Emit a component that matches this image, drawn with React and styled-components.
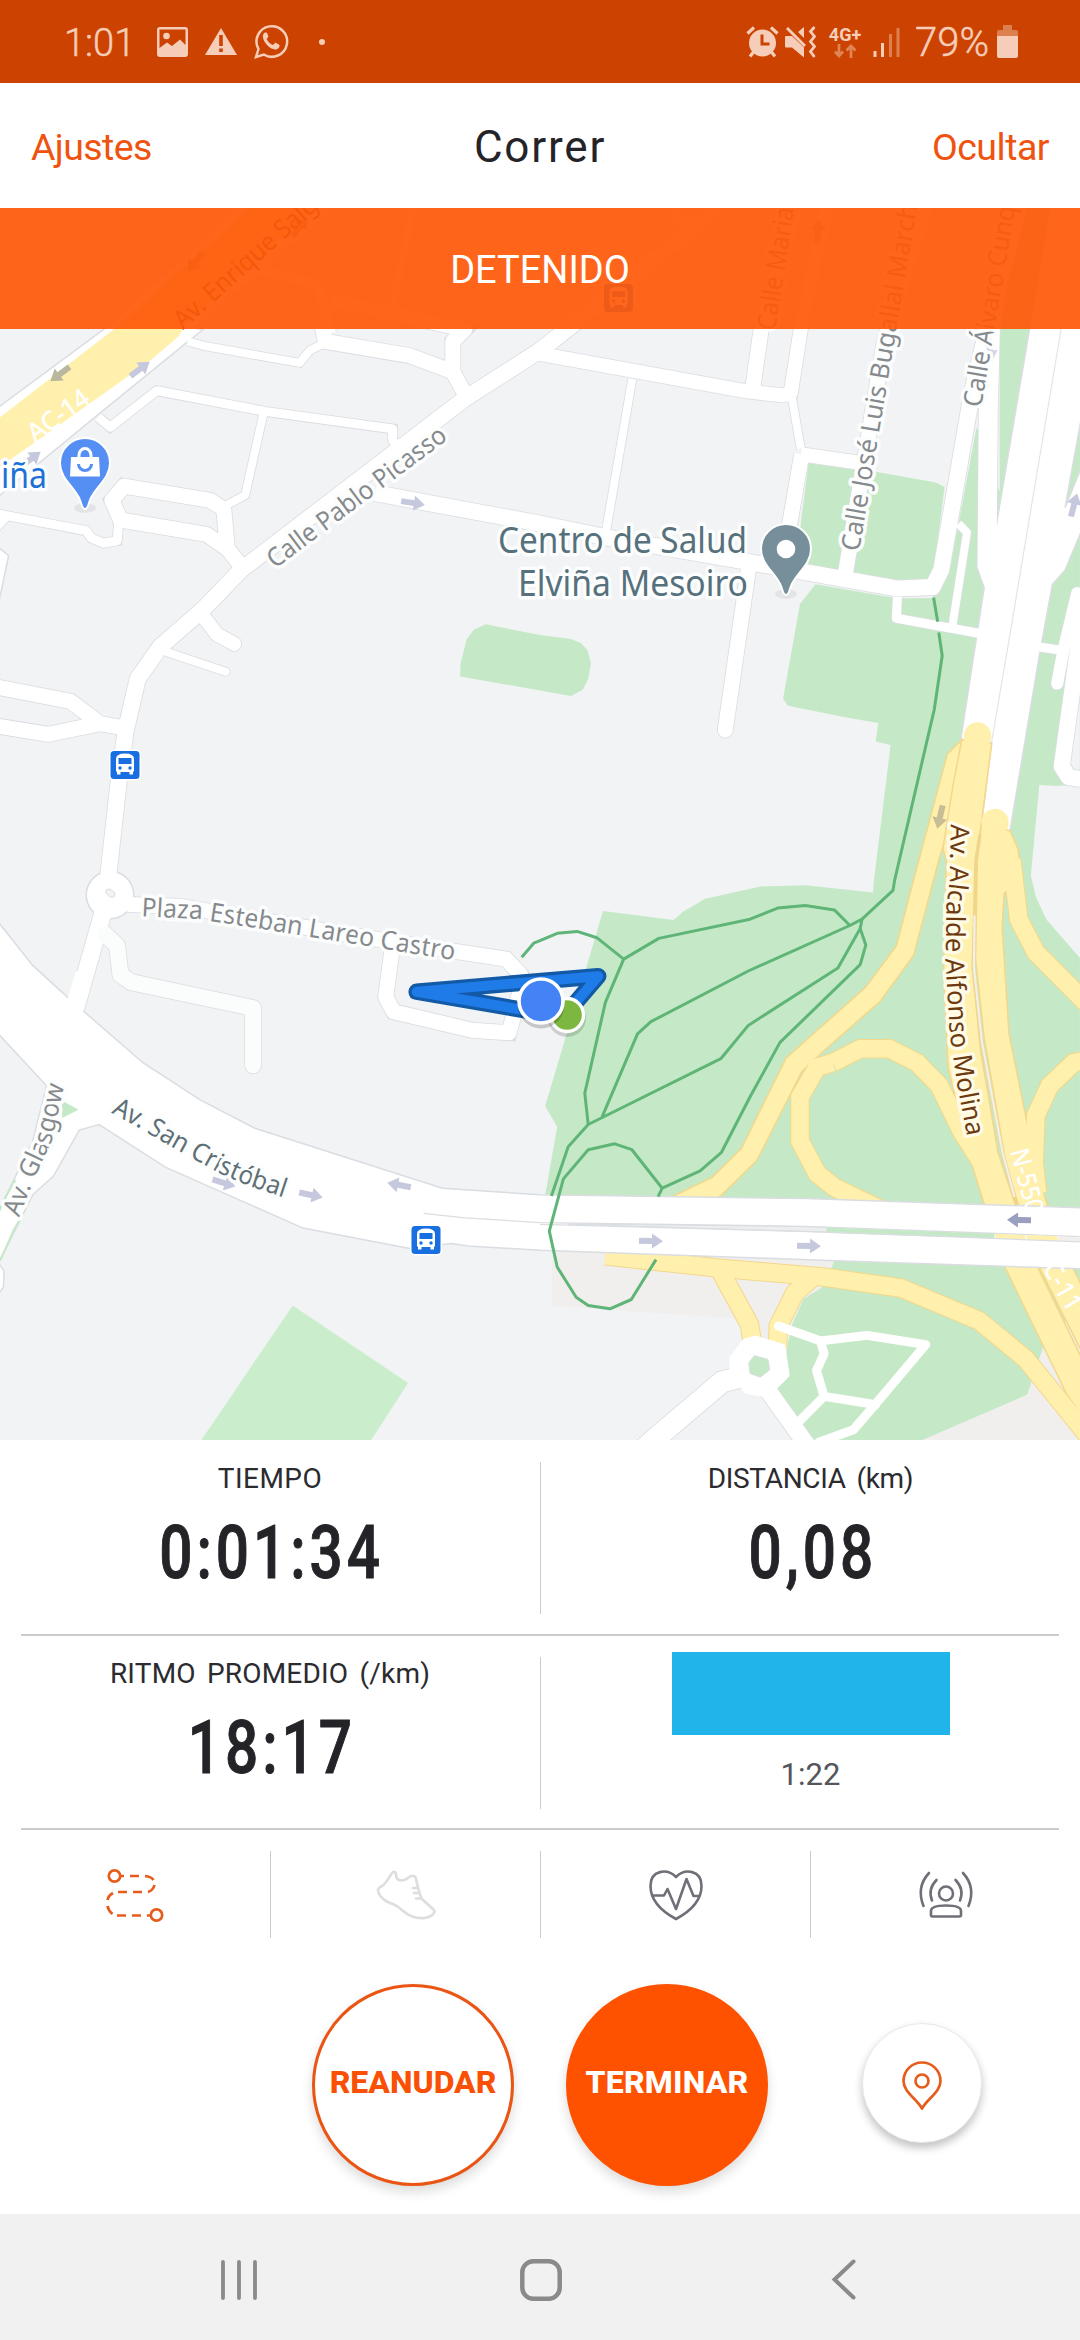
import React from "react";
import styled, { createGlobalStyle } from "styled-components";

const GlobalStyle = createGlobalStyle`
  * { box-sizing: border-box; }
  body { margin: 0; background: #fff; }
  svg { display: block; flex: none; overflow: visible; }
`;

const UI = `Roboto, "Noto Sans", sans-serif`;
const MAP_FONT = `"Noto Sans", "Open Sans", sans-serif`;

/* ---------- map geometry ---------- */

/* Points are stored per survey tile; each tile has its own origin and resolution. */
const TILES = {
  A: [0, 320, 2.904, 2.8],
  B: [540, 320, 2.904, 2.8],
  C: [0, 860, 2.904, 2.703],
  D: [540, 860, 2.904, 2.703],
  T: [0, 200, 1.452, 3],
};

function pts(data) {
  let tile = TILES.A;
  return data
    .trim()
    .split(/\s+/)
    .map((token) => {
      let t = token;
      if (TILES[t[0]]) {
        tile = TILES[t[0]];
        t = t.slice(1);
      }
      const [x, y] = t.split(",").map(Number);
      return `${(tile[0] + x / tile[2]).toFixed(1)},${(tile[1] + y / tile[3]).toFixed(1)}`;
    })
    .join(" ");
}
const pathOf = (data) => "M" + pts(data).split(" ").join(" L");

const GREENS = [
  "B780,400 915,420 975,425 1150,455 1175,468 1140,725 1040,735 740,700",
  "B800,740 755,795 706,1060 720,1080 890,1113 982,1128 975,1180 1018,1190 970,1568 D967,88 770,68 640,72 480,105 415,140 388,162 183,138 15,665 50,722 15,905 D0,960 D833,960 D833,1020 D1568,1130 D1568,265 1470,160 1440,100 1425,40 B1425,1560 1450,1302 1500,1305 1568,1300 T1568,20 T1482,20 T1452,400 B1335,27 1335,480 1268,300 1190,700 1140,778 1040,780",
  "D862,1070 1568,1100 1568,1200 1460,1320 1415,1445 1110,1568 760,1568 640,1400 715,1330 730,1260 765,1187 820,1155",
  "A1336,998 1338,960 1355,895 1375,868 1410,852 B0,882 90,893 120,905 138,925 148,960 140,1005 125,1035 90,1053 0,1037",
];
const BEIGES = [
  "D35,1055 35,1205 580,1240 600,1320 680,1320 740,1240 820,1155 862,1140 862,1070",
  "D1460,1320 1568,1200 1568,1568 1110,1568 1415,1445",
];

const ROADS = [
  [8, "A545,60 590,72 870,120 900,85 935,68"],
  [15, "A935,15 945,60 1190,100 1315,145 1355,215"],
  [15, "T480,300 675,388 A1315,60 1315,145"],
  [11, "T376,208 462,255 468,300 480,400"],
  [8, "T600,20 570,320"],
  [9, "A285,272 320,300 455,198 770,256 1140,305 1140,335 1155,360"],
  [8, "A765,262 712,490 655,520"],
  [15, "A710,700 660,640 600,600 350,560 325,505 360,465 610,505 650,530 660,640"],
  [9, "A345,565 340,618 300,625 265,610 250,590 15,547 -20,540"],
  [8, "A25,545 -10,582"],
  [16, "T1045,15 T1000,95 T825,385 B60,40 B0,85 A1350,220 700,700 590,810 465,915 400,1005 365,1150 345,1290 315,1550 C315,60"],
  [12, "T975,20 T1002,95"],
  [14, "A590,830 630,880 680,907", true],
  [8, "A485,930 655,985", true],
  [15, "A-20,1026 205,1068 290,1130 350,1140"],
  [15, "A-20,1135 140,1160 290,1130"],
  [16, "A1090,485 1568,570 B200,610 620,680 880,725 1040,752 1140,748 1165,700 1255,200 T1440,330 T1480,20"],
  [14, "B0,95 600,200 705,211 728,205 757,27 T1200,20"],
  [15, "B617,195 642,27 T1155,20"],
  [8, "B268,165 192,590"],
  [8, "B732,220 757,360"],
  [14, "B757,376 930,400"],
  [15, "B760,376 720,600 715,690"],
  [15, "B885,720 1000,60 T1345,20"],
  [19, "B1308,20 1302,250 1298,680 1345,800"],
  [8, "B1215,570 1240,595 1198,855"],
  [9, "B1038,775 1035,835 1290,880"],
  [15, "B605,700 538,1148", true],
  [9, "B1445,915 1515,925"],
  [12, "B1560,765 1520,925 1502,1018", true],
  [16, "B1580,800 1515,1250 1535,1280 1590,1288"],
  [17, "C318,80 220,400"],
  [15, "C370,120 520,125 1130,220 1470,268 1512,310 1512,350 1478,467 1370,460 1143,410 1120,370 1140,230"],
  [21, "D575,1400 530,1410 330,1568 280,1610"],
  [17, "D655,1425 765,1568 790,1600"],
];
const PATHS = [
  "D693,1260 815,1300 950,1285 1120,1310 975,1470 910,1540 810,1574",
  "D815,1300 825,1335 803,1380 825,1450 975,1472",
  "D825,1450 750,1520",
];
const WHITE_AREAS = [
  "A-10,248 300,27 T345,20 T490,20 T283,385 A590,27 540,65 285,265 -10,498",
  "A-10,632 25,660 -10,820",
  "T1525,20 T1590,20 B1590,180 1525,525 1590,370 1590,550 1525,700 1488,740 1450,940 1365,1430 1280,1430 1310,1190 1222,1175 1290,750 1268,690 1325,575",
  "C-20,150 95,285 195,370 415,548 580,648 740,725 1285,887 1568,905 D770,915 1600,941 1600,1106 860,1083 0,1055 C1360,1043 1310,1037 1190,1050 880,995 480,830 288,715 230,730 155,855 95,905 -10,1100 -10,960 95,760 135,610 -20,455",
  "C-10,1080 12,1112 10,1155 -10,1180",
];
const YELLOW_LINES = [
  "D850,548 930,510 1015,510 1095,548 1160,610 1225,735 1290,830",
  "D850,548 805,560 755,640 755,760 805,848 855,885 990,945",
  "D1370,0 1390,160 1440,250 1590,390",
  "D1590,540 1550,548 1480,610 1440,690 1435,820 1445,900",
  "D190,1070 520,1103 820,1127 1048,1157 1275,1245 1412,1350 1590,1555",
  "D520,1105 608,1255 620,1320",
  "D790,1130 740,1170 692,1260 690,1320",
];
const YELLOW_AREAS = [
  "B1225,1175 1183,1215 1085,1568 D1035,232 945,345 715,535 585,780 500,858 350,925 490,930 525,908 630,812 760,572 825,515 988,382 1085,258 1158,0 B1215,1340",
  "B1225,1175 1312,1185 1280,1420 D1268,0 1255,290 1280,520 1330,790 1385,945 1450,1110 1600,1400 1600,1540 1530,1445 1350,1100 1290,930 1245,795 1185,560 1172,300 1180,0 B1170,1480 1200,1300",
  "B1282,1410 1365,1430 1388,1480 1400,1568 D1348,90 1342,180 1362,470 1410,690 1443,840 1500,1015 1600,1200 1600,1380 1455,1110 1390,935 1355,830 1290,480 1265,270 1270,0",
];
const TRAILS = [
  "B1143,777 1155,845",
  "B1158,875 1168,940 1145,1090 1030,1568 D1025,82 935,160 900,177 855,135 770,123 690,130 610,160 345,212 243,268 190,385 130,630 140,715",
  "D900,177 605,300 322,437 283,470 180,695",
  "D935,160 930,185 865,292 605,447 525,537 140,715 82,775 33,908",
  "D930,185 946,230 930,283 697,493 610,640 527,790 465,840 355,887 343,910",
  "D355,887 267,783 217,767 140,783 68,862 27,1003 50,1100 105,1182 140,1204 203,1213 265,1188 337,1080",
  "D243,268 165,210 108,193 50,198 0,218 C1550,225 1515,263",
];
const TRACK = "D60,430 D90,400 D169,314 C1210,356 C1568,413";

const ARROWS = [
  [60, 374, 143, "#b9b79f"],
  [140, 369, -37, "#c6c9dd"],
  [31, 459, -37, "#c6c9dd"],
  [195, 262, 125, "#c9a27a"],
  [300, 227, -52, "#c9a27a"],
  [818, 231, -86, "#b6b9cd"],
  [990, 350, 80, "#d3d5e6"],
  [413, 503, 9, "#c6c9dd"],
  [1074, 505, -75, "#c6c9dd"],
  [224, 1183, 17, "#c6c9dd"],
  [311, 1195, 12, "#c6c9dd"],
  [399, 1185, 191, "#c6c9dd"],
  [651, 1241, 1, "#c6c9dd"],
  [809, 1246, 1, "#c6c9dd"],
  [1019, 1220, 181, "#9a9fc0"],
  [940, 817, 103, "#c8be95"],
];

const LABELS = [
  { id: "picasso", d: "M275,569 L455,434", len: 217, text: "Calle Pablo Picasso" },
  { id: "plaza", d: pathOf("C410,152 580,160 870,203 1330,273"), len: 316, text: "Plaza Esteban Lareo Castro" },
  { id: "cristobal", d: pathOf("C322,683 400,722 480,766 640,848 720,880 840,917"), len: 193, text: "Av. San Cristóbal", color: "#5f6f76" },
  { id: "glasgow", d: pathOf("C55,966 100,860 150,760 190,595"), len: 140, text: "Av. Glasgow" },
  { id: "jose", d: "M859,552 L924,165", len: 366, text: "Calle José Luis Bugallal Marche" },
  { id: "alvaro", d: "M981,408 L1020,180", len: 219, text: "Calle Álvaro Cunqu" },
  { id: "maria", d: "M775,331 L797,190", len: 124, text: "Calle Maria" },
  { id: "enrique", d: "M183,330 L341,188", len: 212, text: "Av. Enrique Salgad", color: "#6d3a10", halo: "none" },
  {
    id: "molina",
    d: pathOf("B1193,1412 1190,1568 D1180,130 1178,280 1190,470 1210,600 1243,760"),
    len: 314,
    text: "Av. Alcalde Alfonso Molina",
    color: "#6d3a10",
    halo: "#fffbe6",
  },
  { id: "ac14", d: "M35,443 L98,398", len: 70, text: "AC-14", color: "#fff", halo: "none", weight: 500 },
  { id: "n550", d: "M1010,1151 L1032,1235", len: 66, text: "N-550", color: "#fff", halo: "none", weight: 500 },
  { id: "c11", d: "M1042,1268 L1075,1325", len: 52, text: "C-11", color: "#fff", halo: "none", weight: 500 },
];

/* ---------- map ---------- */

const MapArea = styled.section`
  display: grid;
  height: 1232px;
  overflow: hidden;
  & > * { grid-area: 1 / 1; }
`;
const MapSvg = styled.svg`
  width: 1080px;
  height: 1232px;
  overflow: hidden;
`;
const StreetName = styled.text`
  font: ${(p) => p.$weight || 400} 26px ${MAP_FONT};
  fill: ${(p) => p.$color || "#868a8d"};
  stroke: ${(p) => p.$halo || "#fcfdfd"};
  stroke-width: 7px;
  stroke-linejoin: round;
  paint-order: stroke;
`;
const PoiName = styled(StreetName)`
  font-size: 36px;
`;

function BusStop({ x, y }) {
  return (
    <g transform={`translate(${x} ${y})`}>
      <rect x="-16" y="-15.5" width="32" height="31" rx="5" fill="#fff" />
      <rect x="-14.5" y="-14" width="29" height="28" rx="3.5" fill="#1a6fe0" />
      <path d="M-9,-6 Q-9,-11.500 0,-11.500 Q9,-11.500 9,-6 V6.500 H8 V9.500 H4.500 V7 H-4.500 V9.500 H-8 V6.500 H-9 Z" fill="#fff" />
      <rect x="-6.500" y="-7" width="13" height="6" fill="#1a6fe0" />
      <circle cx="-5" cy="3" r="1.700" fill="#1a6fe0" />
      <circle cx="5" cy="3" r="1.700" fill="#1a6fe0" />
    </g>
  );
}

function Pin({ x, y, color, children }) {
  return (
    <g transform={`translate(${x} ${y})`}>
      <ellipse cx="0" cy="45" rx="11" ry="5" fill="#000" opacity=".06" />
      <path d="M0,46 C-3,46 -3,42 -5,37 C-10,24 -25,16 -25,0 A25,25 0 0 1 25,0 C25,16 10,24 5,37 C3,42 3,46 0,46 Z" fill={color} stroke="#fff" strokeWidth="2" />
      {children}
    </g>
  );
}

function StreetMap() {
  return (
    <MapSvg viewBox="0 208 1080 1232">
      <rect y="208" width="1080" height="1232" fill="#f1f3f5" />
      <g fill="#f1efed">{BEIGES.map((d) => <polygon key={d} points={pts(d)} />)}</g>
      <g fill="#c5e9c6">{GREENS.map((d) => <polygon key={d} points={pts(d)} />)}</g>
      <polygon points={pts("C850,1204 1185,1414 1075,1572 582,1572")} fill="#caeecb" />
      <polygon points={pts("B1568,830 1540,1240 1550,1258 1568,1262")} fill="#f1f3f5" />

      <g fill="none" stroke="#dadde1">
        {ROADS.map(([w, d, round]) => (
          <polyline key={d} points={pts(d)} strokeWidth={w + 1.6} strokeLinecap={round ? "round" : "butt"} />
        ))}
        <polyline points={pts("C305,200 340,232 350,310 380,330 735,400 735,555")} strokeWidth="17.500" strokeLinecap="round" strokeLinejoin="round" />
        <circle cx="110" cy="895" r="23.500" strokeWidth="2" />
      </g>
      <g fill="#fff" stroke="#dadde1" strokeWidth="1.500">
        {WHITE_AREAS.slice(0, 3).map((d) => <polygon key={d} points={pts(d)} />)}
      </g>
      <g fill="none" stroke="#fff">
        {ROADS.map(([w, d, round]) => (
          <polyline key={d} points={pts(d)} strokeWidth={w} strokeLinecap={round ? "round" : "butt"} strokeLinejoin="round" />
        ))}
      </g>
      <polyline points={pts("C305,200 340,232 350,310 380,330 735,400 735,555")} fill="none" stroke="#fbfcfc" strokeWidth="16" strokeLinecap="round" strokeLinejoin="round" />
      <circle cx="110" cy="895" r="23" fill="#fff" />
      <path d="M106,890 l4,-1 l5,4 l-1,4 l-4,0 l-4,-4 Z" fill="#f1f3f5" stroke="#dadde1" />
      <polygon points={pts("A-10,280 330,27 T365,20 T460,20 T262,385 A530,27 520,45 435,115 -10,418")} fill="#fff0ad" />
      <polyline points={pts("T1550,20 B1513,27 1365,880 1310,1190")} fill="none" stroke="#e3e5e8" strokeWidth="1.200" />

      <g fill="none" stroke="#f3d78b" strokeWidth="19.500">
        {YELLOW_LINES.map((d) => <polyline key={d} points={pts(d)} />)}
      </g>
      <g fill="#fff0ad" stroke="#f3d78b" strokeWidth="1.500">
        {YELLOW_AREAS.map((d) => <polygon key={d} points={pts(d)} />)}
      </g>
      <g fill="none" stroke="#fff0ad" strokeWidth="17.500">
        {YELLOW_LINES.map((d) => <polyline key={d} points={pts(d)} />)}
      </g>
      <circle cx="977.500" cy="736" r="13.700" fill="#fff0ad" />
      <circle cx="995" cy="822.500" r="13.700" fill="#fff0ad" />
      <polyline points={pts("B1278,1440 D1266,0 1258,290 1282,490 1343,790 1388,945")} fill="none" stroke="#f0d58c" strokeWidth="3.400" />
      <polyline points={pts("D1262,150 1260,290 1283,490 1343,790 1378,910")} fill="none" stroke="#f2efec" strokeWidth="2.200" />

      <g fill="#fff" stroke="#dadde1" strokeWidth="1.500">
        {WHITE_AREAS.slice(3).map((d) => <polygon key={d} points={pts(d)} />)}
      </g>
      <polygon points={pts("C195,380 220,300 265,320 240,415 220,430")} fill="#fff" />
      <polyline points={pts("C1230,955 1350,967 1568,980 D770,990 1600,1019")} fill="none" stroke="#dadde1" strokeWidth="1.300" />
      <polygon points={pts("D80,984 770,991 833,993 833,1006")} fill="#eeeeef" stroke="#dadde1" strokeWidth="1" />
      <polygon points={pts("D833,993 1320,1010 1320,1023 833,1008")} fill="#c5e9c6" />
      <polygon points={pts("D1320,1010 1408,1014 1412,1026 1325,1023")} fill="#fff0ad" />
      <polygon points={pts("D1412,1014 1500,1016 1508,1029 1416,1026")} fill="#fff0ad" />
      <polygon points={pts("D1504,1018 1570,1020 1570,1031 1508,1029")} fill="#f1efed" />
      <polyline points={pts("D0,985 840,1006 1600,1033")} fill="none" stroke="#dadde1" strokeWidth="1.200" />

      <polygon points={pts("C180,650 228,675 180,697")} fill="#c5e9c6" />
      <g fill="none" stroke="#c5e9c6" strokeWidth="2">
        <polyline points={pts("C0,1083 40,1000 68,955")} />
        <polyline points={pts("C-2,948 20,905 45,865")} />
      </g>

      <polygon points={pts("D550,1345 590,1295 625,1285 712,1310 725,1395 685,1432 640,1450 595,1442 550,1380")} fill="#fff" />
      <polygon points={pts("D622,1340 662,1350 667,1378 640,1398 610,1388 606,1360")} fill="#c5e9c6" stroke="#dadde1" />
      <g fill="none" stroke="#fff" strokeWidth="9" strokeLinecap="round" strokeLinejoin="round">
        {PATHS.map((d) => <polyline key={d} points={pts(d)} />)}
      </g>

      <g fill="none" stroke="#5fb577" strokeWidth="3" strokeLinejoin="round">
        {TRAILS.map((d) => <polyline key={d} points={pts(d)} />)}
      </g>

      {ARROWS.map(([x, y, angle, color]) => (
        <path key={`${x}-${y}`} transform={`translate(${x} ${y}) rotate(${angle})`} d="M-12,-3 H1 V-7.500 L12,0 L1,7.500 V3 H-12 Z" fill={color} />
      ))}

      {LABELS.map((l) => (
        <React.Fragment key={l.id}>
          <path id={l.id} d={l.d} fill="none" />
          <StreetName $color={l.color} $halo={l.halo} $weight={l.weight}>
            <textPath href={`#${l.id}`} textLength={l.len} lengthAdjust="spacingAndGlyphs">{l.text}</textPath>
          </StreetName>
        </React.Fragment>
      ))}

      <PoiName x="1" y="488" textLength="46" lengthAdjust="spacingAndGlyphs" $color="#1d70d6">iña</PoiName>
      <PoiName x="498" y="553" textLength="249" lengthAdjust="spacingAndGlyphs" $color="#56707c">Centro de Salud</PoiName>
      <PoiName x="518" y="596" textLength="230" lengthAdjust="spacingAndGlyphs" $color="#56707c">Elviña Mesoiro</PoiName>

      <Pin x={85} y={463} color="#568ff3">
        <path d="M-14,-6 H14 L15,13.500 H-15 Z" fill="#fff" />
        <path d="M-6,-5 V-8 a6,6.500 0 0 1 12,0 V-5" fill="none" stroke="#fff" strokeWidth="3" />
        <path d="M-6.500,1 a6.500,6.500 0 0 0 13,0" fill="none" stroke="#568ff3" strokeWidth="3" />
      </Pin>
      <Pin x={786} y={549} color="#778f9b">
        <circle r="9.300" fill="#fff" />
      </Pin>
      <BusStop x={125} y={765} />
      <BusStop x={426} y={1240} />
      <BusStop x={618.5} y={298} />

      <g fill="none" strokeLinejoin="round">
        <polyline points={pts(TRACK)} stroke="#1259a6" strokeWidth="16.500" />
        <polyline points={pts(TRACK)} stroke="#1f7be7" strokeWidth="10" />
      </g>
      <circle cx="567" cy="1018" r="19" fill="#000" opacity=".15" />
      <circle cx="567" cy="1015" r="16.500" fill="#7cb83f" stroke="#fff" strokeWidth="3.400" />
      <circle cx="541" cy="1005" r="23.500" fill="#000" opacity=".18" />
      <circle cx="541" cy="1001" r="22" fill="#4483f5" stroke="#fff" strokeWidth="3.600" />
    </MapSvg>
  );
}

/* ---------- screen ---------- */

const Screen = styled.main`
  display: flex;
  flex-direction: column;
  width: 1080px;
  height: 2340px;
  overflow: hidden;
  background: #fff;
  font-family: ${UI};
  & > * { flex-shrink: 0; }
`;

const StatusBar = styled.header`
  display: flex;
  justify-content: space-between;
  align-items: center;
  height: 83px;
  padding: 0 62px 0 64px;
  background: #cc4200;
  color: #f5cdb9;
`;
const StatusGroup = styled.div`
  display: flex;
  align-items: center;
  gap: ${(p) => p.$gap}px;
`;
const StatusText = styled.span`
  font-size: ${(p) => p.$size}px;
  font-weight: 300;
  line-height: 44px;
  -webkit-text-stroke: 0.5px currentColor;
  padding-top: 3px;
  margin: 0 ${(p) => p.$after || 0}px 0 ${(p) => p.$before || 0}px;
`;
const NetworkType = styled.div`
  display: flex;
  flex-direction: column;
  align-items: center;
  gap: 1px;
  width: 32px;
  font: 700 18px/17px ${UI};
`;

const TitleBar = styled.nav`
  display: grid;
  grid-template-columns: 1fr auto 1fr;
  align-items: center;
  height: 125px;
  padding: 2px 31px 0;
`;
const TitleAction = styled.button`
  border: 0;
  padding: 0;
  background: none;
  color: #ef5310;
  font: 400 37.5px/44px ${UI};
  letter-spacing: ${(p) => p.$track}px;
  text-align: ${(p) => p.$align};
`;
const Title = styled.h1`
  margin: 0;
  color: #242428;
  font: 400 44px/52px ${UI};
  letter-spacing: 1.8px;
`;

const Banner = styled.div`
  display: flex;
  align-items: center;
  justify-content: center;
  z-index: 1;
  height: 121px;
  padding-top: 3px;
  background: rgba(255, 89, 10, 0.93);
  color: #fff;
  font: 400 38px/44px ${UI};
`;

const MetricRow = styled.div`
  display: grid;
  grid-template-columns: 1fr 1fr;
  padding: ${(p) => p.$top}px 0 ${(p) => p.$bottom}px;
`;
const Divider = styled.hr`
  width: 1038px;
  height: 2px;
  margin: 0 auto;
  border: 0;
  background: #cbcbcd;
`;
const Metric = styled.div`
  display: flex;
  flex-direction: column;
  align-items: center;
  height: 152px;
  & + & { border-left: 1px solid #cbcbcd; }
`;
const MetricLabel = styled.span`
  color: #2b2b30;
  font: 400 28px/33px ${UI};
  letter-spacing: ${(p) => p.$track || 0}px;
  word-spacing: ${(p) => p.$words || 0}px;
`;
const MetricValue = styled.strong`
  color: #242428;
  font: 500 74px/90px ${UI};
  margin-top: 13px;
  letter-spacing: 5px;
  padding-left: 5px;
  -webkit-text-stroke: 1px currentColor;
  transform: scaleX(0.79);
`;
const PaceBar = styled.div`
  width: 278px;
  height: 83px;
  margin-top: -5px;
  background: #20b4ea;
`;
const PaceTime = styled.span`
  margin-top: 21px;
  color: #55555b;
  font: 400 31px/38px ${UI};
`;

const ToolRow = styled.div`
  display: grid;
  grid-template-columns: repeat(4, 1fr);
  height: 109px;
  padding-top: 21px;
`;
const Tool = styled.button`
  display: flex;
  align-items: center;
  justify-content: center;
  height: 87px;
  border: 0;
  padding: 0;
  background: none;
  & + & { border-left: 1px solid #cbcbcd; }
`;

const Controls = styled.section`
  display: flex;
  align-items: center;
  height: 275px;
  padding: 17px 98px 0 312px;
`;
const RoundButton = styled.button`
  display: flex;
  align-items: center;
  justify-content: center;
  width: 202px;
  height: 202px;
  margin-right: ${(p) => p.$after}px;
  border: 3px solid ${(p) => (p.$filled ? "#ff5200" : "#ea5514")};
  border-radius: 50%;
  padding: 0 0 6px;
  background: ${(p) => (p.$filled ? "#ff5200" : "#fff")};
  color: ${(p) => (p.$filled ? "#fff" : "#f95006")};
  box-shadow: 0 6px 12px rgba(0, 0, 0, 0.14);
  font: 800 32px/40px ${UI};
  letter-spacing: ${(p) => p.$track}px;
`;
const LocateButton = styled.button`
  display: flex;
  align-items: center;
  justify-content: center;
  width: 120px;
  height: 120px;
  margin-bottom: 4px;
  border: 1px solid #e9e9e9;
  border-radius: 50%;
  padding: 4px 0 0;
  background: #fff;
  box-shadow: 0 5px 9px rgba(0, 0, 0, 0.24);
`;

const SystemNav = styled.footer`
  display: flex;
  align-items: center;
  height: 126px;
  padding: 5px 0 0 219px;
  background: #f1f1f1;
`;
const NavKey = styled.svg`
  margin-right: ${(p) => p.$after || 0}px;
`;

export default function App() {
  return (
    <Screen>
      <GlobalStyle />
      <StatusBar>
        <StatusGroup $gap={17}>
          <StatusText $size={38} $after={5}>1:01</StatusText>
          <svg width="31" height="30" viewBox="0 0 31 30">
            <path fillRule="evenodd" fill="#f5cdb9" d="M3,0 H28 Q31,0 31,3 V27 Q31,30 28,30 H3 Q0,30 0,27 V3 Q0,0 3,0 Z M2.500,2.500 V21 L10,15.500 L15,19 L23,12.500 L28.500,18 V2.500 Z" />
            <circle cx="9.500" cy="9" r="3.300" fill="#f5cdb9" />
          </svg>
          <svg width="32" height="27" viewBox="0 0 32 27">
            <path d="M16,0 L32,27 H0 Z" fill="#f5cdb9" />
            <path d="M14.200,7 H17.800 V18 H14.200 Z M14.200,20.500 H17.800 V24 H14.200 Z" fill="#cc4200" />
          </svg>
          <svg width="34" height="35" viewBox="0 0 34 35">
            <path d="M2,33 L4.500,25 A15.300,15.300 0 1 1 9.800,30.500 Z" fill="none" stroke="#f5cdb9" strokeWidth="2.500" />
            <path d="M11.500,8.500 C10,8.500 8.800,10.500 8.800,12.500 C9.500,19 16,25 21,25.500 C23.500,25.500 26,23.500 25.500,21 L21.500,18.500 L19,21 C16,20 13.500,17.500 12.700,15 L14.500,12.500 L13,8.800 Z" fill="#f5cdb9" />
          </svg>
          <svg width="34" height="8" viewBox="0 0 34 8"><circle cx="17" cy="4" r="3" fill="#f5cdb9" /></svg>
        </StatusGroup>
        <StatusGroup $gap={7}>
          <svg width="33" height="32" viewBox="3 0 33 32" stroke="#f5cdb9" fill="none">
            <circle cx="16.500" cy="17" r="13.500" fill="#f5cdb9" stroke="none" />
            <path d="M1.500,7.500 L8,1.500 M31.500,7.500 L25,1.500" strokeWidth="3.200" />
            <path d="M7.500,26 L4,30.500 M25.500,26 L29,30.500" strokeWidth="3.200" />
            <path d="M16,8.500 V18 H23.500" stroke="#cc4200" strokeWidth="3" />
          </svg>
          <svg width="33" height="32" viewBox="4 0 33 32">
            <path d="M0,11 Q0,10 1,10 H7 L19,21.500 V31.500 L7,21.500 H1 Q0,21.500 0,20.500 Z M13,6 L19,1 V12 Z" fill="#f5cdb9" />
            <path d="M2,2 L20,20" stroke="#f5cdb9" strokeWidth="2.800" />
            <path d="M29.500,1 L25.500,5.500 L29.500,10.500 L25.500,15.500 L29.500,20.500 L25.500,25.500 L29.500,31" fill="none" stroke="#f5cdb9" strokeWidth="2.800" />
          </svg>
          <NetworkType>
            4G+
            <svg width="22" height="14" viewBox="0 0 22 14" stroke="#e08655" strokeWidth="2.700" fill="none">
              <path d="M5,0 V12 M1,7.500 L5,12 L9,7.500 M17,14 V2 M12.500,6.500 L17,2 L21.500,6.500" />
            </svg>
          </NetworkType>
          <svg width="36" height="32" viewBox="3 0 36 32" strokeWidth="3">
            <path d="M10,25 V31 M17.500,17 V31" stroke="#f5cdb9" />
            <path d="M25.500,8 V31 M33,2 V31" stroke="#dd8050" />
          </svg>
          <StatusText $size={40} $before={4} $after={1}>79%</StatusText>
          <svg width="21" height="33" viewBox="0 0 21 33">
            <path d="M6,0 H15 V5 H19 Q21,5 21,7 V12 H0 V7 Q0,5 2,5 H6 Z" fill="#dd8050" />
            <path d="M0,11 H21 V31 Q21,33 19,33 H2 Q0,33 0,31 Z" fill="#f5cdb9" />
          </svg>
        </StatusGroup>
      </StatusBar>

      <TitleBar>
        <TitleAction $align="left" $track={-0.6}>Ajustes</TitleAction>
        <Title>Correr</Title>
        <TitleAction $align="right" $track={-0.5}>Ocultar</TitleAction>
      </TitleBar>

      <MapArea>
        <StreetMap />
        <Banner>DETENIDO</Banner>
      </MapArea>

      <MetricRow $top={22} $bottom={20}>
        <Metric>
          <MetricLabel $track={0.5}>TIEMPO</MetricLabel>
          <MetricValue>0:01:34</MetricValue>
        </Metric>
        <Metric>
          <MetricLabel $track={-0.3} $words={4}>DISTANCIA (km)</MetricLabel>
          <MetricValue>0,08</MetricValue>
        </Metric>
      </MetricRow>
      <Divider />
      <MetricRow $top={21} $bottom={19}>
        <Metric>
          <MetricLabel $track={0.2} $words={4}>RITMO PROMEDIO (/km)</MetricLabel>
          <MetricValue>18:17</MetricValue>
        </Metric>
        <Metric>
          <PaceBar />
          <PaceTime>1:22</PaceTime>
        </Metric>
      </MetricRow>
      <Divider />

      <ToolRow>
        <Tool>
          <svg width="58" height="54" viewBox="0 0 58 54" fill="none" stroke="#e65c1c" strokeWidth="2.700">
            <circle cx="8.500" cy="8" r="5.700" />
            <circle cx="50.500" cy="47" r="5.700" />
            <path d="M14,8 H18 M24,8 H33 M39,8 Q45,8.500 47.500,12 M48.500,17 Q47,22.500 42,24 M27,24 H36 M12,24 H21 M7,25 Q2,28 1.500,32 M1.500,38 Q2.500,43 6.500,46 M11,47.500 H20 M26,47.500 H35 M41,47.500 H45" />
          </svg>
        </Tool>
        <Tool>
          <svg width="60" height="50" viewBox="0 0 60 50" fill="none" stroke="#dedede" strokeWidth="2.700" strokeLinejoin="round" strokeLinecap="round">
            <path d="M6,16 C10,14 13,7 16,3 C18,1 20,2 20,4 C20,10 23,11 28,10 C32,9 34,5 37,6 C39,6 40,7 40,9 C42,17 43,24 46,29 C50,33 54,36 58,40 C60,43 55,47 49,48 C40,49 33,46 27,41 C21,35 19,35 14,33 C6,30 2,24 2,20 C2,18 4,17 6,16 Z M37,18 H42 M38,23 H43 M40,28.500 H46" />
          </svg>
        </Tool>
        <Tool>
          <svg width="54" height="52" viewBox="0 0 54 52" fill="none" stroke="#6f6f78" strokeWidth="2.600" strokeLinejoin="round">
            <path d="M27,8 C18,-1 1.500,1 1.500,17 C1.500,32 14,43 27,50 C40,43 52.500,32 52.500,17 C52.500,1 36,-1 27,8 Z" />
            <path d="M4,26.500 H15 L18.500,20 L27,40 L37.500,10 L44.500,27 H50" />
          </svg>
        </Tool>
        <Tool>
          <svg width="54" height="48" viewBox="0 0 54 48" fill="none" stroke="#6f6f78" strokeWidth="2.600" strokeLinecap="round" strokeLinejoin="round">
            <circle cx="27" cy="22.500" r="7" />
            <path d="M12,40 C12,36 19,34.500 27,34.500 C35,34.500 42,36 42,40 V44 Q42,45.500 40.500,45.500 H13.500 Q12,45.500 12,44 Z" />
            <path d="M17.500,9 Q8.500,18 13,29.500 M36.500,9 Q45.500,18 41,29.500 M10,2 Q-3,16 4.500,35 M44,2 Q57,16 49.500,35" />
          </svg>
        </Tool>
      </ToolRow>

      <Controls>
        <RoundButton $after={52} $track={0}>REANUDAR</RoundButton>
        <RoundButton $filled $after={94} $track={0.2}>TERMINAR</RoundButton>
        <LocateButton>
          <svg width="40" height="49" viewBox="0 0 40 49" fill="none" stroke="#e65c1c" strokeWidth="2.700" strokeLinejoin="round">
            <path d="M20,47.500 C15,38 1.500,31 1.500,20 A18.500,18.500 0 0 1 38.500,20 C38.500,31 25,38 20,47.500 Z" />
            <circle cx="20" cy="20" r="6.500" />
          </svg>
        </LocateButton>
      </Controls>

      <SystemNav>
        <NavKey $after={261} width="40" height="40" viewBox="0 0 40 40" stroke="#8a8a8a" strokeWidth="3.800" strokeLinecap="round">
          <path d="M4,2 V38 M20,2 V38 M36,2 V38" />
        </NavKey>
        <NavKey $after={270} width="42" height="42" viewBox="0 0 42 42" fill="none" stroke="#8a8a8a" strokeWidth="4.500">
          <rect x="2.300" y="2.300" width="37.400" height="37.400" rx="11" />
        </NavKey>
        <NavKey width="24" height="41" viewBox="0 0 24 41" fill="none" stroke="#8a8a8a" strokeWidth="4" strokeLinecap="round">
          <path d="M21.500,2.500 L2.500,20.500 L21.500,38.500" />
        </NavKey>
      </SystemNav>
    </Screen>
  );
}
